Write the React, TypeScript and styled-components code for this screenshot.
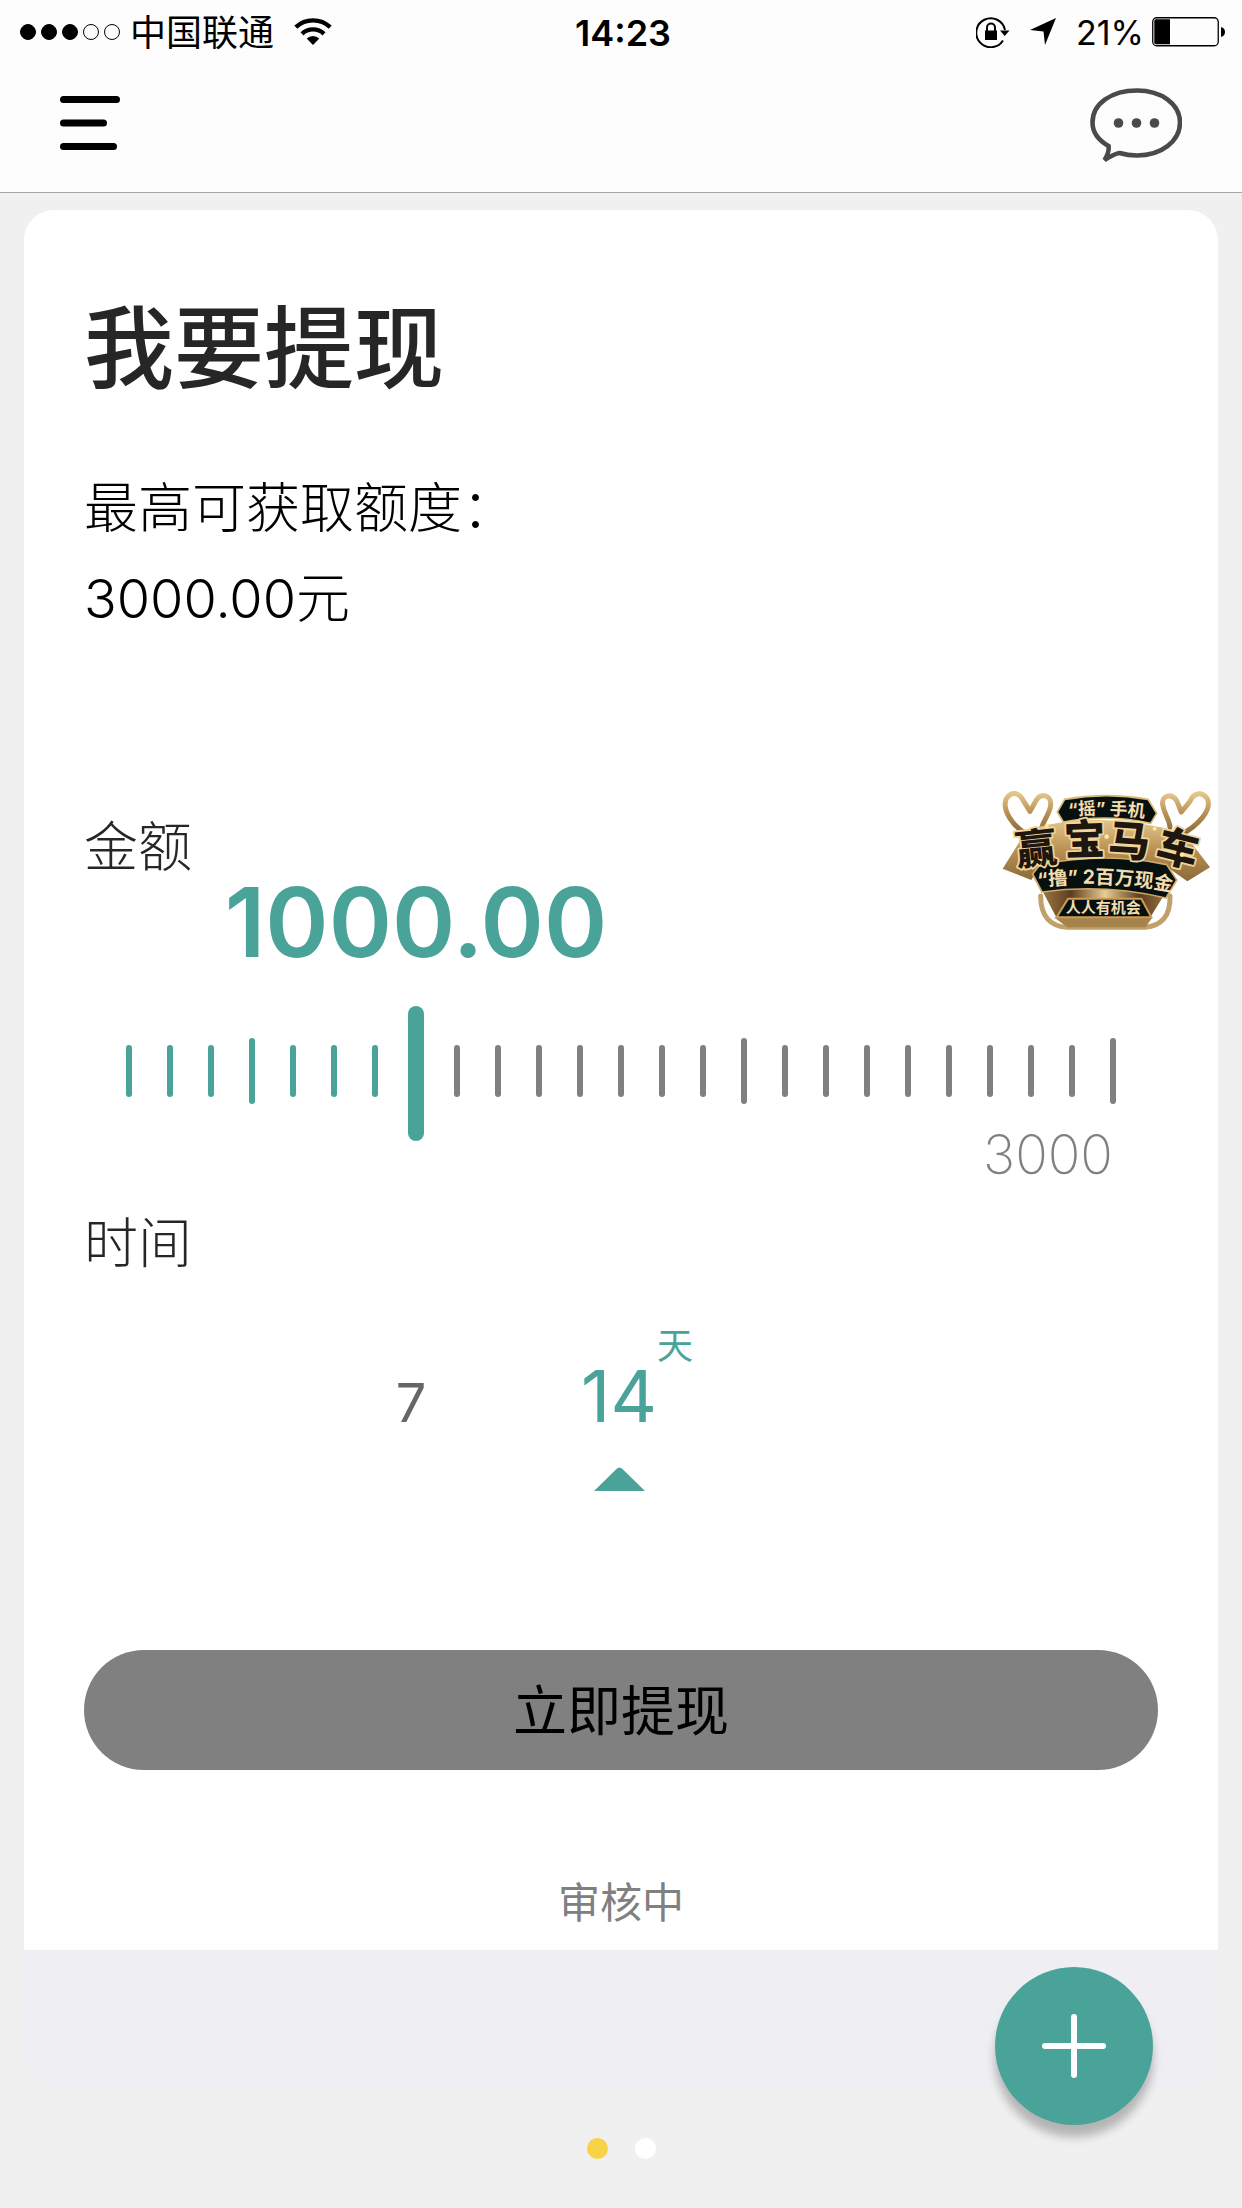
import React, { useState } from 'react';
import styled, { createGlobalStyle } from 'styled-components';

const TEAL = '#4aa398';
const GREY = '#808080';
const INK = '#262626';

const TICKS = 25;
const TALL_TICKS = [3, 15, 24];
const STEP_VALUE = 125;
const MAX_AMOUNT = 3000;

const GlobalStyle = createGlobalStyle`
  * { box-sizing: border-box; }
  body {
    margin: 0;
    background: #f0f0f0;
    color: #000;
    font-family: Inter, "Noto Sans CJK SC", sans-serif;
  }
  button, input { font: inherit; }
`;

const Page = styled.div`
  min-height: 100vh;
  display: flex;
  flex-direction: column;
`;

const Header = styled.header`
  background: #fdfdfd;
  border-bottom: 1px solid #a5a5a5;
`;

const StatusBar = styled.div`
  display: grid;
  grid-template-columns: 1fr auto 1fr;
  align-items: center;
  height: 60px;
  padding: 0 16px 0 20px;
  font-size: 36px;
  line-height: 60px;
`;

const StatusGroup = styled.div<{ $end?: boolean }>`
  display: flex;
  align-items: center;
  justify-content: ${(p) => (p.$end ? 'flex-end' : 'flex-start')};
`;

const Signal = styled.div`
  display: flex;
  gap: 5px;
  margin-right: 10px;
`;

const SignalDot = styled.span<{ $on: boolean }>`
  width: 16px;
  height: 16px;
  border-radius: 50%;
  border: 1px solid #000;
  background: ${(p) => (p.$on ? '#000' : 'transparent')};
`;

const Carrier = styled.span`
  padding-top: 3px;
  margin-right: 20px;
`;

const Clock = styled.time`
  padding-top: 3px;
  font-weight: 600;
`;

const Percent = styled.span`
  padding-top: 3px;
  font-size: 34px;
  margin: 0 8px 0 20px;
`;

const NavBar = styled.nav`
  display: flex;
  justify-content: space-between;
  align-items: flex-start;
  height: 132px;
  padding: 26px 60px 0;
`;

const IconButton = styled.button`
  padding: 0;
  border: 0;
  background: none;
  display: flex;
  cursor: pointer;
`;

const MenuButton = styled(IconButton)`
  margin-top: 10px;
`;

const Card = styled.main`
  position: relative;
  flex: 1;
  display: flex;
  flex-direction: column;
  margin: 17px 24px 0;
  border-radius: 30px;
  overflow: hidden;
  background: #eeeef3;
`;

const Panel = styled.form`
  background: #fff;
  padding: 76px 60px 17px;
`;

const Title = styled.h1`
  margin: 0 0 52px;
  color: ${INK};
  font-size: 90px;
  line-height: 126px;
  font-weight: 500;
`;

const Quota = styled.p`
  margin: 0;
  font-size: 54px;
  line-height: 90px;
  font-weight: 300;
`;

const Label = styled.label`
  display: block;
  margin-top: 168px;
  color: ${INK};
  font-size: 54px;
  line-height: 72px;
  font-weight: 300;
`;

const Scale = styled.div`
  margin: 0 45px;
`;

const Amount = styled.output`
  display: block;
  width: max-content;
  transform: translateX(-50%);
  color: ${TEAL};
  font-size: 96px;
  line-height: 76px;
  font-weight: 600;
`;

const Ruler = styled.div`
  display: grid;
  align-items: center;
  height: 135px;
  margin: 46px 37px 0;
`;

const Ticks = styled.div`
  grid-area: 1 / 1;
  display: flex;
  justify-content: space-between;
  align-items: center;
  padding: 0 5px 5px;
`;

const Tick = styled.span<{ $tall: boolean; $active: boolean }>`
  width: 6px;
  height: ${(p) => (p.$tall ? 66 : 52)}px;
  border-radius: 3px;
  background: ${(p) => (p.$active ? TEAL : GREY)};
`;

const Range = styled.input`
  grid-area: 1 / 1;
  appearance: none;
  width: 100%;
  height: 135px;
  margin: 0;
  background: transparent;
  cursor: pointer;

  &::-webkit-slider-thumb {
    appearance: none;
    width: 16px;
    height: 135px;
    border-radius: 8px;
    background: ${TEAL};
  }
`;

const MaxLabel = styled.div`
  margin: -13px 45px 0;
  text-align: right;
  color: ${GREY};
  font-size: 54px;
  line-height: 54px;
  font-weight: 200;
`;

const Periods = styled.fieldset`
  margin: 26px 0 0;
  padding: 0;
  border: 0;
  min-width: 0;
`;

const Legend = styled.legend`
  padding: 0;
  color: ${INK};
  font-size: 54px;
  line-height: 72px;
  font-weight: 300;
`;

const PeriodGrid = styled.div`
  display: grid;
  grid-template-columns: repeat(3, 208px);
  justify-content: center;
  align-items: baseline;
  margin-top: 80px;
  padding-right: 4px;
`;

const Period = styled.label<{ $active: boolean }>`
  display: flex;
  flex-direction: column;
  align-items: center;
  color: ${(p) => (p.$active ? TEAL : '#666')};
  font-size: ${(p) => (p.$active ? 72 : 54)}px;
  line-height: 72px;
  cursor: pointer;
`;

const PeriodRadio = styled.input`
  position: absolute;
  opacity: 0;
  pointer-events: none;
`;

const Days = styled.span`
  position: relative;
`;

const Unit = styled.span`
  position: absolute;
  left: 100%;
  bottom: 100%;
  margin-bottom: -16px;
  font-size: 36px;
  line-height: 60px;
`;

const Pointer = styled.svg`
  display: block;
  margin-top: 35px;
`;

const Submit = styled.button`
  display: block;
  width: 100%;
  height: 120px;
  margin-top: 159px;
  padding: 0 0 6px;
  border: 0;
  border-radius: 60px;
  background: ${GREY};
  color: #000;
  font-size: 54px;
  cursor: pointer;
`;

const Review = styled.p`
  margin: 103px 0 0;
  text-align: center;
  color: ${GREY};
  font-size: 42px;
  line-height: 60px;
`;

const Promo = styled.a`
  position: absolute;
  top: 579px;
  right: 5px;
  display: block;
`;

const Pager = styled.footer`
  display: flex;
  justify-content: center;
  gap: 27px;
  height: 120px;
  padding-top: 50px;
`;

const PageDot = styled.button<{ $on: boolean }>`
  width: 21px;
  height: 21px;
  padding: 0;
  border: 0;
  border-radius: 50%;
  background: ${(p) => (p.$on ? '#f8d347' : '#fff')};
`;

const Fab = styled.button`
  position: fixed;
  right: 89px;
  bottom: 83px;
  width: 158px;
  height: 158px;
  padding: 0;
  border: 0;
  border-radius: 50%;
  background: ${TEAL};
  box-shadow: 0 12px 10px rgba(0, 0, 0, 0.25);
  display: grid;
  place-items: center;
  cursor: pointer;
`;

const WifiIcon = () => (
  <svg width="38" height="28" viewBox="0 0 38 28" fill="none" stroke="#000" aria-hidden="true">
    <path d="M1.800 9.200A25 25 0 0 1 36.200 9.200" strokeWidth="4.400" />
    <path d="M8 15.800A16 16 0 0 1 30 15.800" strokeWidth="4.400" />
    <path d="M12.700 20.500A9 9 0 0 1 25.300 20.500L19 27Z" fill="#000" stroke="none" />
  </svg>
);

const LockIcon = () => (
  <svg width="34" height="32" viewBox="0 0 34 32" aria-hidden="true">
    <path d="M27 24.500A14.500 14.500 0 1 1 29 14" fill="none" stroke="#000" strokeWidth="2" />
    <path d="M24 14.500H33.500L28.700 20Z" />
    <path d="M9 14.500H21V24H9Z" />
    <path d="M11 15V11.500A4 4 0 0 1 19 11.500V15" fill="none" stroke="#000" strokeWidth="2" />
  </svg>
);

const LocationIcon = () => (
  <svg width="46" height="27" viewBox="-20 0 46 27" aria-hidden="true">
    <path d="M26 0L15 27L13.500 13.500L0 12Z" />
  </svg>
);

const BatteryIcon = () => (
  <svg width="74" height="30" viewBox="0 0 74 30" aria-hidden="true">
    <rect x="0.750" y="0.750" width="65.500" height="28" rx="4" fill="none" stroke="#000" strokeWidth="1.300" />
    <path d="M4 2.300H18V27.200H4Q2.300 27.200 2.300 25.500V4Q2.300 2.300 4 2.300Z" />
    <path d="M69 10Q73 11 73 15Q73 19 69 20Z" />
  </svg>
);

const MenuIcon = () => (
  <svg width="60" height="55" viewBox="0 0 60 55" aria-hidden="true">
    <rect width="60" height="7" rx="3.500" />
    <rect y="23.500" width="47" height="7" rx="3.500" />
    <rect y="47" width="57" height="7" rx="3.500" />
  </svg>
);

const ChatIcon = () => (
  <svg width="92" height="78" viewBox="0 0 92 78" aria-hidden="true">
    <path
      d="M18.500 60C8 54 2.500 46 2.500 36.500C2.500 17.500 21.500 4.500 47 4.500C71.500 4.500 90 18 90 36.500C90 55.500 71 69.500 47 69.500C40 69.500 34.500 68.500 29.500 67C25 67.500 20 70.500 14.500 74C17 70 19.500 65.500 18.500 60Z"
      fill="none"
      stroke="#4a4a4a"
      strokeWidth="4.600"
    />
    <g fill="#4a4a4a">
      <circle cx="28.500" cy="37" r="4.800" />
      <circle cx="46.500" cy="37" r="4.800" />
      <circle cx="64.500" cy="37" r="4.800" />
    </g>
  </svg>
);

const PromoArt = () => (
  <svg
    width="213"
    height="143"
    viewBox="60 57 639 429"
    fontFamily='Inter, "Noto Sans CJK SC", sans-serif'
    fontWeight="700"
  >
    <defs>
      <linearGradient id="gold" x1="0" y1="0" x2="0" y2="1">
        <stop offset="0" stopColor="#e2c68a" />
        <stop offset="0.500" stopColor="#b98f52" />
        <stop offset="1" stopColor="#8a6a39" />
      </linearGradient>
      <linearGradient id="bowl" x1="0" y1="0" x2="1" y2="0">
        <stop offset="0" stopColor="#a98348" />
        <stop offset="0.250" stopColor="#5d3d20" />
        <stop offset="0.500" stopColor="#e8cd92" />
        <stop offset="0.750" stopColor="#5d3d20" />
        <stop offset="1" stopColor="#a98348" />
      </linearGradient>
      <path id="arcTop" d="M220 144Q380 122 540 150" />
      <path id="arcMid" d="M130 358Q370 318 620 374" />
    </defs>
    <g fill="none" stroke="url(#gold)" strokeWidth="15" strokeLinecap="round" strokeLinejoin="round">
      <path d="M136 190C100 168 66 122 78 88C92 62 118 66 130 92L150 124L168 92C184 66 214 76 212 104C210 132 190 150 186 172" />
      <path d="M606 192C650 168 698 122 682 86C664 62 640 70 630 94L604 126L590 92C574 68 544 76 548 104C552 132 568 146 570 172" />
      <path d="M182 378C182 440 212 470 262 472H496C542 468 572 440 570 378" stroke="#bfa169" />
    </g>
    <path d="M170 330H580L512 440H228Z" fill="url(#bowl)" />
    <path d="M222 442H518L496 472H262Z" fill="#a5834a" />
    <path d="M142 178Q370 116 612 190L690 292L622 334L560 290Q380 250 180 286L154 330L68 296Z" fill="url(#gold)" />
    <path d="M158 312L180 284Q380 244 560 284L590 330L558 384Q370 340 186 366Z" fill="#06110f" stroke="#cfa867" strokeWidth="5" />
    <path d="M232 126L254 88Q380 66 504 88L530 130L512 160Q380 130 250 156Z" fill="#06110f" stroke="#d9b878" strokeWidth="5" />
    <path d="M264 386H484L514 442H230Z" fill="#06110f" stroke="#cf9c55" strokeWidth="6" />
    <g fill="#1d1710" stroke="#f0d49a" strokeWidth="11" strokeLinejoin="round" paintOrder="stroke" textAnchor="middle" fontWeight="900">
      <text x="168" y="280" fontSize="124" transform="rotate(-6 168 235)">赢</text>
      <text x="314" y="254" fontSize="124" transform="rotate(-2 314 210)">宝</text>
      <text x="448" y="258" fontSize="124" transform="rotate(4 448 210)">马</text>
      <text x="594" y="280" fontSize="124" transform="rotate(14 594 235)">车</text>
    </g>
    <g fill="#f3dcae" textAnchor="middle">
      <text fontSize="53"><textPath href="#arcTop" startOffset="50%">“摇” 手机</textPath></text>
      <text fontSize="58"><textPath href="#arcMid" startOffset="50%">“撸” 2百万现金</textPath></text>
      <text x="370" y="429" fontSize="45">人人有机会</text>
    </g>
    <g fill="#ffe9a0">
      <circle cx="200" cy="168" r="6" />
      <circle cx="380" cy="200" r="7" />
      <circle cx="524" cy="176" r="6" />
      <circle cx="606" cy="254" r="7" />
    </g>
  </svg>
);

export default function App() {
  const [step, setStep] = useState(7);
  const [days, setDays] = useState(14);
  const amount = Math.min(MAX_AMOUNT, (step + 1) * STEP_VALUE);

  return (
    <Page>
      <GlobalStyle />
      <Header>
        <StatusBar>
          <StatusGroup>
            <Signal>
              {[0, 1, 2, 3, 4].map((n) => (
                <SignalDot key={n} $on={n < 3} />
              ))}
            </Signal>
            <Carrier>中国联通</Carrier>
            <WifiIcon />
          </StatusGroup>
          <Clock>14:23</Clock>
          <StatusGroup $end>
            <LockIcon />
            <LocationIcon />
            <Percent>21%</Percent>
            <BatteryIcon />
          </StatusGroup>
        </StatusBar>
        <NavBar>
          <MenuButton type="button" aria-label="菜单">
            <MenuIcon />
          </MenuButton>
          <IconButton type="button" aria-label="消息">
            <ChatIcon />
          </IconButton>
        </NavBar>
      </Header>

      <Card>
        <Panel onSubmit={(e) => e.preventDefault()}>
          <Title>我要提现</Title>
          <Quota>最高可获取额度：</Quota>
          <Quota>3000.00元</Quota>

          <Label htmlFor="amount">金额</Label>
          <Scale>
            <Amount htmlFor="amount" style={{ marginLeft: `${(step / (TICKS - 1)) * 100}%` }}>
              {amount.toFixed(2)}
            </Amount>
          </Scale>
          <Ruler>
            <Ticks>
              {Array.from({ length: TICKS }, (_, i) => (
                <Tick key={i} $tall={TALL_TICKS.includes(i)} $active={i <= step} />
              ))}
            </Ticks>
            <Range
              id="amount"
              type="range"
              min={0}
              max={TICKS - 1}
              value={step}
              onChange={(e) => setStep(Number(e.target.value))}
            />
          </Ruler>
          <MaxLabel>{MAX_AMOUNT}</MaxLabel>

          <Periods>
            <Legend>时间</Legend>
            <PeriodGrid>
              {[7, 14].map((d) => (
                <Period key={d} $active={d === days}>
                  <PeriodRadio type="radio" name="days" checked={d === days} onChange={() => setDays(d)} />
                  <Days>
                    {d}
                    {d === days && <Unit>天</Unit>}
                  </Days>
                  {d === days && (
                    <Pointer width="51" height="24" viewBox="0 0 51 24" fill={TEAL} aria-hidden="true">
                      <path d="M0 24L22.500 2Q25.500 -1 28.500 2L51 24Z" />
                    </Pointer>
                  )}
                </Period>
              ))}
            </PeriodGrid>
          </Periods>

          <Submit type="submit">立即提现</Submit>
          <Review>审核中</Review>
        </Panel>
        <Promo href="#promo">
          <PromoArt />
        </Promo>
      </Card>

      <Pager>
        <PageDot type="button" aria-label="第1页" $on />
        <PageDot type="button" aria-label="第2页" $on={false} />
      </Pager>

      <Fab type="button" aria-label="添加">
        <svg width="64" height="64" viewBox="0 0 64 64" stroke="#fff" strokeWidth="6" strokeLinecap="round" aria-hidden="true">
          <path d="M3 32H61M32 3V61" />
        </svg>
      </Fab>
    </Page>
  );
}
